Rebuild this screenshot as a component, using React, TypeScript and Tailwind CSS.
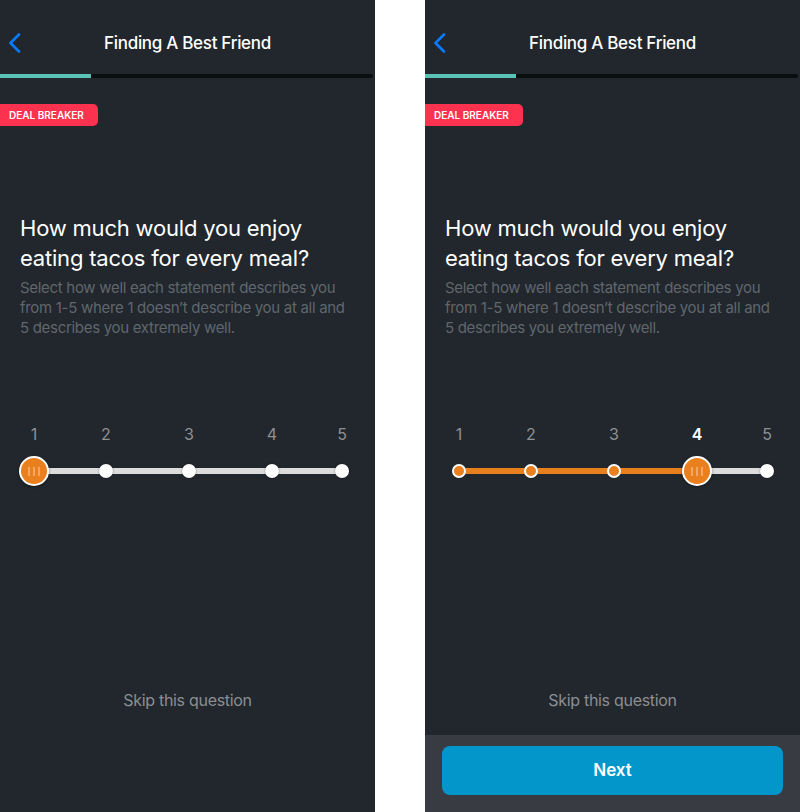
import React from 'react';

const stops = [
  { n: 1, x: 'left-[34px]' },
  { n: 2, x: 'left-[106px]' },
  { n: 3, x: 'left-[189px]' },
  { n: 4, x: 'left-[272px]' },
  { n: 5, x: 'left-[342px]' },
];

// width of the orange fill from the first stop, per value
const fillWidth: Record<number, string> = {
  1: 'w-0',
  2: 'w-[72px]',
  3: 'w-[155px]',
  4: 'w-[238px]',
  5: 'w-[308px]',
};

function Thumb() {
  return (
    <div className="w-[30px] h-[30px] rounded-full bg-[#e97f1d] border-2 border-white flex items-center justify-center gap-[3px] shadow-[0_1px_3px_rgba(0,0,0,0.4)]">
      <span className="w-[2px] h-[9px] bg-[#f5a762]" />
      <span className="w-[2px] h-[9px] bg-[#f5a762]" />
      <span className="w-[2px] h-[9px] bg-[#f5a762]" />
    </div>
  );
}

function Slider({ value }: { value: number }) {
  return (
    <div className="mt-[86px]">
      <div className="relative h-[20px]">
        {stops.map((s) => (
          <span
            key={s.n}
            className={`absolute top-0 -translate-x-1/2 text-[16px] leading-[20px] ${s.x} ${
              s.n === value && value !== 1 ? 'text-white font-semibold' : 'text-[#8d9094]'
            }`}
          >
            {s.n}
          </span>
        ))}
      </div>
      <div className="relative h-[30px] mt-[12px]">
        <div className="absolute left-[34px] top-[12px] w-[308px] h-[6px] rounded-full bg-[#dcdcdc]" />
        <div className={`absolute left-[34px] top-[12px] h-[6px] bg-[#e97f1d] ${fillWidth[value]}`} />
        {stops.map((s) => {
          if (s.n === value) {
            return (
              <div key={s.n} className={`absolute top-0 -translate-x-1/2 ${s.x}`}>
                <Thumb />
              </div>
            );
          }
          const done = s.n < value;
          return (
            <div
              key={s.n}
              className={`absolute top-[8px] -translate-x-1/2 w-[14px] h-[14px] rounded-full ${s.x} ${
                done
                  ? 'bg-[#e97f1d] border-2 border-white'
                  : 'bg-white shadow-[0_0_2px_rgba(0,0,0,0.5)]'
              }`}
            />
          );
        })}
      </div>
    </div>
  );
}

function Screen({ value, showNext }: { value: number; showNext?: boolean }) {
  return (
    <div className="w-[375px] h-[812px] bg-[#21272d] flex flex-col font-['Inter',sans-serif]">
      <div className="relative h-[74px] pt-[32px]">
        <svg className="absolute left-[8px] top-[33px]" width="14" height="20" viewBox="0 0 14 20" fill="none">
          <path d="M11 1.5L2.5 10L11 18.5" stroke="#0a7aff" strokeWidth="2.6" strokeLinecap="round" strokeLinejoin="round" />
        </svg>
        <h1 className="text-center text-white text-[17px] leading-[22px] font-medium tracking-[-0.3px]">Finding A Best Friend</h1>
      </div>
      <div className="flex h-[4px] mr-[2px]">
        <div className="w-[91px] bg-[#5bc2b6]" />
        <div className="flex-1 bg-[#0b0e10] rounded-r-full" />
      </div>
      <div className="mt-[26px] w-[98px] h-[22px] bg-[#fd324e] rounded-r-[5px] flex items-center pl-[9px]">
        <span className="text-white text-[10px] font-semibold">DEAL BREAKER</span>
      </div>
      <div className="px-[20px] mt-[87px]">
        <h2 className="text-white text-[22px] leading-[30px] font-normal tracking-[-0.2px]">
          How much would you enjoy eating tacos for every meal?
        </h2>
        <p className="mt-[5px] text-[#60666c] text-[15px] leading-[20px] tracking-[-0.3px]">
          Select how well each statement describes you from 1-5 where 1 doesn’t describe you at all and 5 describes you extremely well.
        </p>
      </div>
      <Slider value={value} />
      <p className="mt-[204px] text-center text-[#8b8e92] text-[16px] leading-[20px] tracking-[-0.3px]">Skip this question</p>
      {showNext && (
        <div className="mt-auto h-[77px] bg-[#383b41] px-[17px] pt-[11px]">
          <button className="w-full h-[49px] rounded-[8px] bg-[#0396cb] text-white text-[17px] font-semibold">
            Next
          </button>
        </div>
      )}
    </div>
  );
}

export default function App() {
  return (
    <div className="w-[800px] h-[812px] bg-white flex justify-between overflow-hidden">
      <Screen value={1} />
      <Screen value={4} showNext />
    </div>
  );
}
